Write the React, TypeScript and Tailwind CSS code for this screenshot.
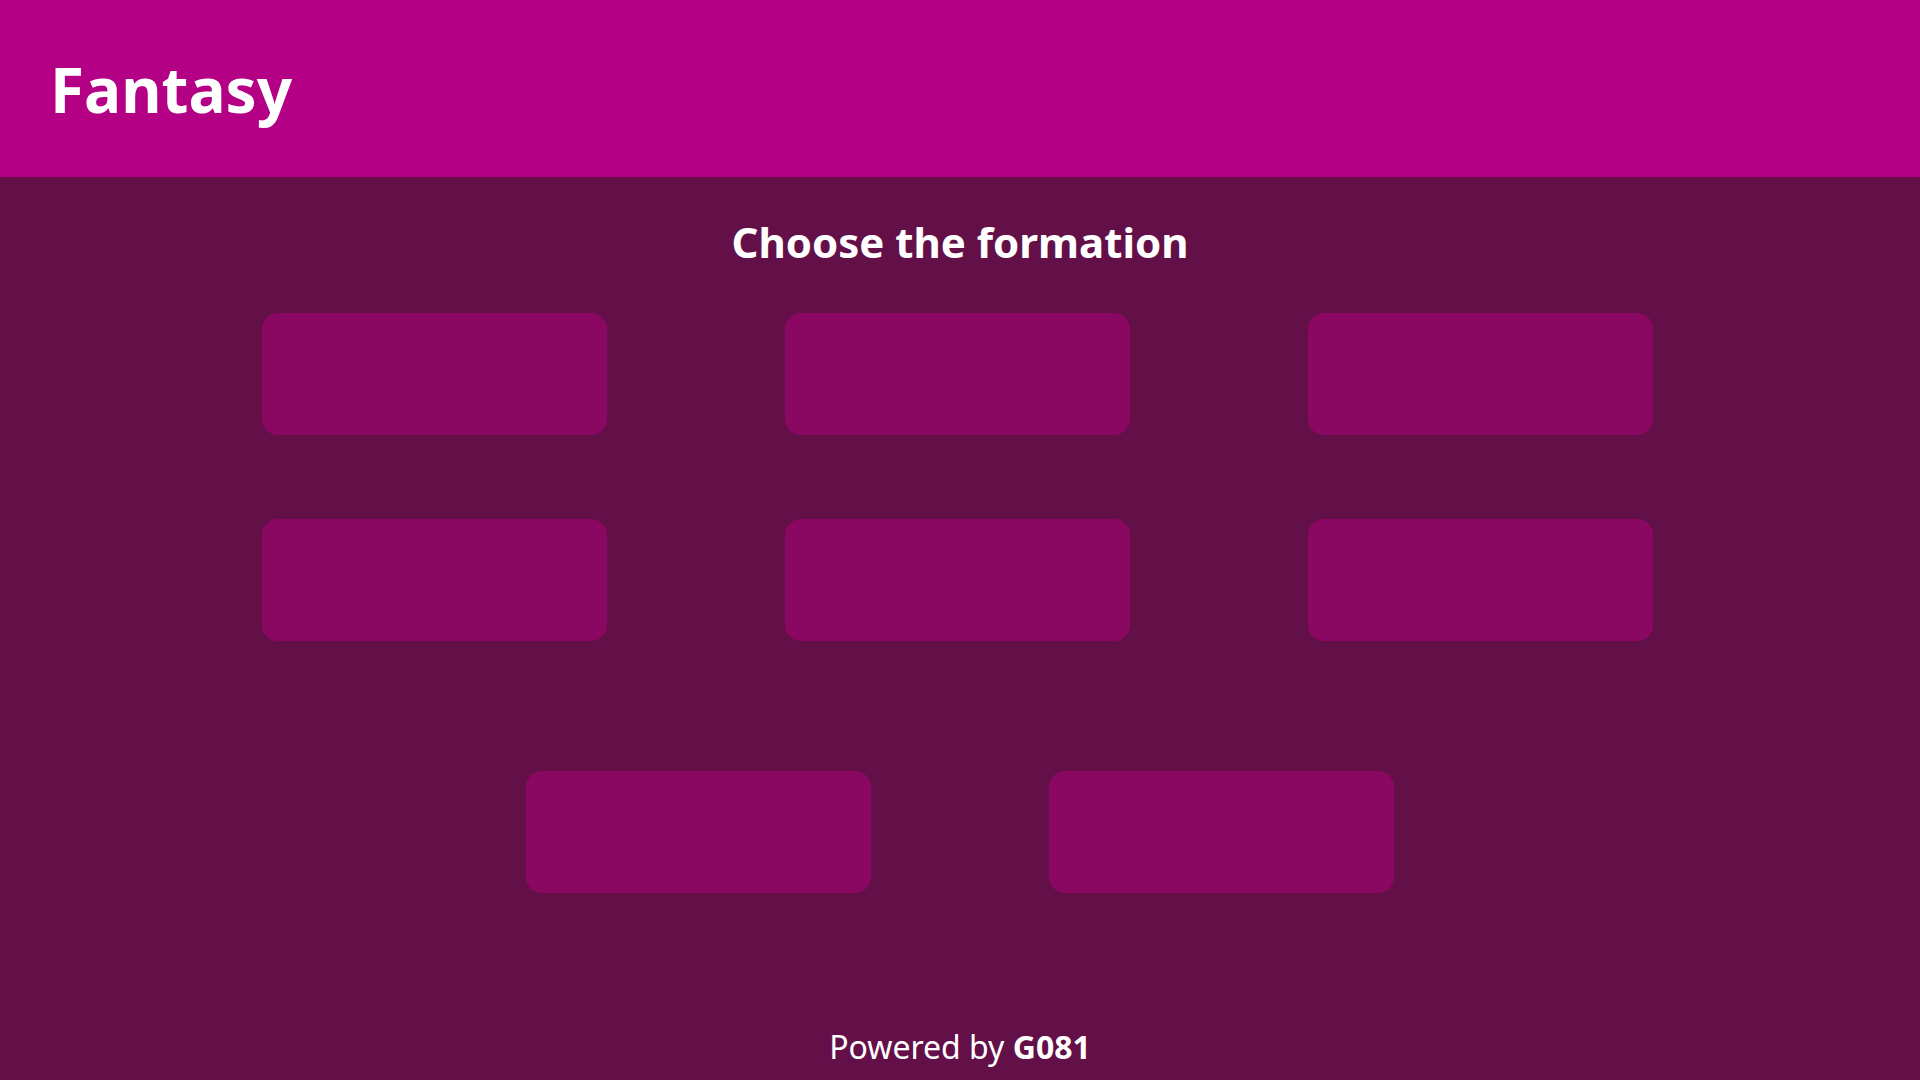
const formations = [0, 1, 2, 3, 4, 5];
const extra = [0, 1];

function FormationCard() {
  return <button className="h-[122px] w-[345px] rounded-[16px] bg-[#8b0862]" />;
}

export default function App() {
  return (
    <div
      className="flex min-h-screen flex-col bg-[#641048] text-white"
      style={{ fontFamily: '"Noto Sans", sans-serif' }}
    >
      <header className="flex h-[177px] items-center bg-[#b30084] px-[50px]">
        <h1 className="text-[62px] leading-none font-bold">Fantasy</h1>
      </header>

      <main className="flex flex-1 flex-col items-center">
        <h2 className="mt-[44px] text-[42px] leading-none font-bold">Choose the formation</h2>

        <div className="mt-[50px] mr-[5px] grid grid-cols-3 gap-x-[178px] gap-y-[84px]">
          {formations.map((f) => (
            <FormationCard key={f} />
          ))}
        </div>

        <div className="mt-[130px] flex gap-x-[178px]">
          {extra.map((f) => (
            <FormationCard key={f} />
          ))}
        </div>
      </main>

      <footer className="flex justify-center pb-[9px] text-[32px]">
        <p>
          Powered by <span className="font-bold">G081</span>
        </p>
      </footer>
    </div>
  );
}
